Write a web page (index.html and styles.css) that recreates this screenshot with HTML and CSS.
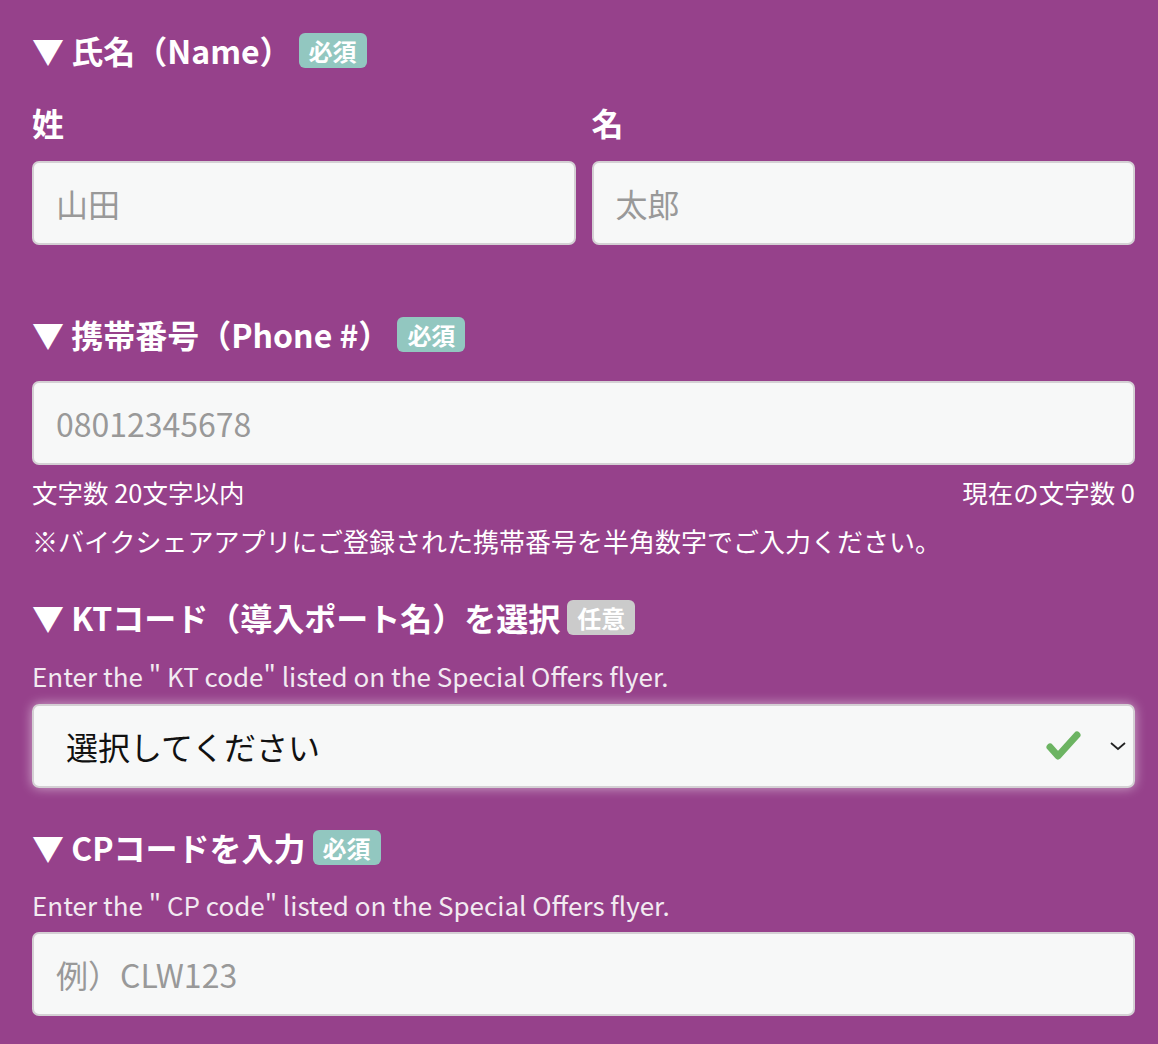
FILE: index.html
```html
<!DOCTYPE html>
<html lang="ja">
<head>
    <meta charset="UTF-8" />
    <title>お申し込みフォーム</title>
    <link rel="stylesheet" href="styles.css">
</head>
<body>
<form class="entry-form">
    <section class="field">
        <h2 class="field-title">▼ 氏名（Name）<span class="badge badge-required">必須</span></h2>
        <div class="name-grid">
            <label class="name-part">
                <span class="name-label">姓</span>
                <input type="text" class="text-input" placeholder="山田" />
            </label>
            <label class="name-part">
                <span class="name-label">名</span>
                <input type="text" class="text-input" placeholder="太郎" />
            </label>
        </div>
    </section>

    <section class="field field-phone">
        <h2 class="field-title">▼ 携帯番号（Phone #）<span class="badge badge-required">必須</span></h2>
        <input type="tel" class="text-input phone-input" id="phoneInput" maxlength="20" placeholder="08012345678" />
        <div class="counter-row">
            <span>文字数 20文字以内</span>
            <span>現在の文字数 <span id="phoneCount">0</span></span>
        </div>
        <p class="note">※バイクシェアアプリにご登録された携帯番号を半角数字でご入力ください。</p>
    </section>

    <section class="field field-kt">
        <h2 class="field-title">▼ KTコード（導入ポート名）を選択<span class="badge badge-optional">任意</span></h2>
        <p class="hint">Enter the " KT code" listed on the Special Offers flyer.</p>
        <div class="select-wrap">
            <select class="select-input">
                <option value="">選択してください</option>
            </select>
            <svg class="select-check" width="40" height="34" viewBox="0 0 40 34">
                <path d="M5 17 L13 26 L32 5" fill="none" stroke="#6cb462" stroke-width="7" stroke-linecap="round" stroke-linejoin="round"/>
            </svg>
            <svg class="select-arrow" width="18" height="12" viewBox="0 0 18 12">
                <path d="M2 3 L9 9 L16 3" fill="none" stroke="#222" stroke-width="1.8"/>
            </svg>
        </div>
    </section>

    <section class="field field-cp">
        <h2 class="field-title">▼ CPコードを入力<span class="badge badge-required">必須</span></h2>
        <p class="hint">Enter the " CP code" listed on the Special Offers flyer.</p>
        <input type="text" class="text-input" placeholder="例）CLW123" />
    </section>
</form>

<script>
    const phoneInput = document.getElementById('phoneInput');
    phoneInput.addEventListener('input', () => {
        document.getElementById('phoneCount').textContent = phoneInput.value.length;
    });
</script>
</body>
</html>
```

FILE: styles.css
```css
body {
    margin: 0;
    padding: 26px 23px 0 32px;
    background: #96418b;
    color: #fff;
    font-family: "Noto Sans CJK JP", "Noto Sans", sans-serif;
}
.entry-form { display: flex; flex-direction: column; }
.field-title {
    display: flex;
    align-items: center;
    margin: 0;
    font-size: 32px;
    font-weight: 700;
    line-height: 48px;
}
.badge {
    display: inline-block;
    margin-left: 7px;
    padding: 0 10px;
    border-radius: 6px;
    font-size: 24px;
    line-height: 35px;
    font-weight: 700;
    color: #fff;
}
.badge-required { background: #92c7c0; }
.badge-optional { background: #cbcbcb; }

.name-grid {
    display: grid;
    grid-template-columns: 1fr 1fr;
    gap: 16px;
}
.name-part { display: flex; flex-direction: column; }
.name-label {
    font-size: 32px;
    font-weight: 700;
    line-height: 48px;
    margin-top: 24px;
    margin-bottom: 15px;
}

.text-input,
.select-input {
    box-sizing: border-box;
    width: 100%;
    height: 84px;
    padding: 0 22px;
    border: 2px solid #d4d0d4;
    border-radius: 7px;
    background: #f7f8f8;
    font-family: inherit;
    font-size: 32px;
    color: #333;
    outline: none;
}
.text-input::placeholder { color: #999; }

.field-phone { margin-top: 65px; }
.phone-input { margin-top: 23px; }
.counter-row {
    display: flex;
    justify-content: space-between;
    margin-top: 9px;
    font-size: 25.5px;
    line-height: 36px;
}
.note {
    margin: 13px 0 0;
    font-size: 26px;
    line-height: 36px;
}

.field-kt { margin-top: 34px; }
.hint {
    margin: 17px 0 10px;
    font-size: 26px;
    line-height: 36px;
    color: #f2eaf1;
}
.select-wrap {
    position: relative;
    border-radius: 7px;
    box-shadow: 0 0 12px rgba(255, 255, 255, 0.55);
}
.select-input {
    display: block;
    padding-left: 32px;
    color: #111;
    appearance: none;
    -webkit-appearance: none;
}
.select-check {
    position: absolute;
    right: 50px;
    top: 26px;
}
.select-arrow {
    position: absolute;
    right: 8px;
    top: 36px;
}

.field-cp { margin-top: 35px; }
.field-cp .hint { margin-top: 16px; margin-bottom: 9px; }
```
